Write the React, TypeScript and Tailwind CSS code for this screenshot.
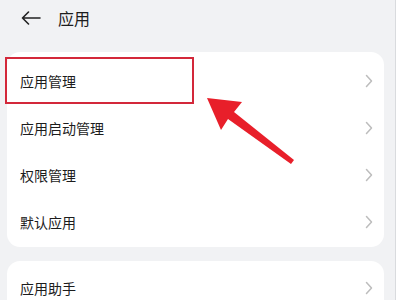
const groups = [
  { rows: ['应用管理', '应用启动管理', '权限管理', '默认应用'], pad: 'pt-[5px] pb-[2px]' },
  { rows: ['应用助手'], pad: 'pt-[3px] pb-[2px]' },
];

function Chevron() {
  return (
    <svg width="8" height="14" viewBox="0 0 8 14" fill="none">
      <path d="M1.5 1.5L6.5 7l-5 5.5" stroke="#bdbdbd" strokeWidth="1.5" strokeLinecap="round" strokeLinejoin="round" />
    </svg>
  );
}

function Row({ label }: { label: string }) {
  return (
    <div className="flex h-[47px] shrink-0 items-center justify-between pl-[13px] pr-[11px]">
      <span className="text-[14px] leading-none text-[#1c1c1c]">{label}</span>
      <Chevron />
    </div>
  );
}

export default function App() {
  return (
    <div
      className="relative flex h-[300px] w-[400px] overflow-hidden bg-white"
      style={{ fontFamily: '"Noto Sans CJK SC", "Noto Sans", sans-serif' }}
    >
      <div className="flex h-full w-[396px] shrink-0 flex-col border-r border-[#d9dbde] bg-[#f1f2f4]">
        <div className="flex h-[36px] shrink-0 items-center pl-[21px]">
          <svg width="20" height="14" viewBox="0 0 20 14" fill="none" className="text-[#222]">
            <path d="M19 7H1.5M7.5 1L1.5 7l6 6" stroke="currentColor" strokeWidth="1.6" strokeLinecap="round" strokeLinejoin="round" />
          </svg>
          <span className="ml-[17px] text-[16px] leading-none text-[#1c1c1c]">应用</span>
        </div>

        <div className="mt-[16px] flex shrink-0 flex-col gap-[14px] pl-[7px] pr-[11px]">
          {groups.map((g, i) => (
            <div key={i} className={`shrink-0 rounded-[13px] bg-white ${g.pad}`}>
              {g.rows.map((r) => (
                <Row key={r} label={r} />
              ))}
            </div>
          ))}
        </div>
      </div>

      {/* annotation */}
      <div className="absolute left-[5px] top-[57px] h-[47px] w-[189px] border-2 border-[#d3283a]" />
      <svg className="absolute left-0 top-0" width="400" height="300" viewBox="0 0 400 300">
        <polygon
          points="207,98 242,102 234,112 294,160 291,164 228,119 221,130"
          fill="#e81f2a"
          strokeLinejoin="round"
        />
      </svg>
    </div>
  );
}
